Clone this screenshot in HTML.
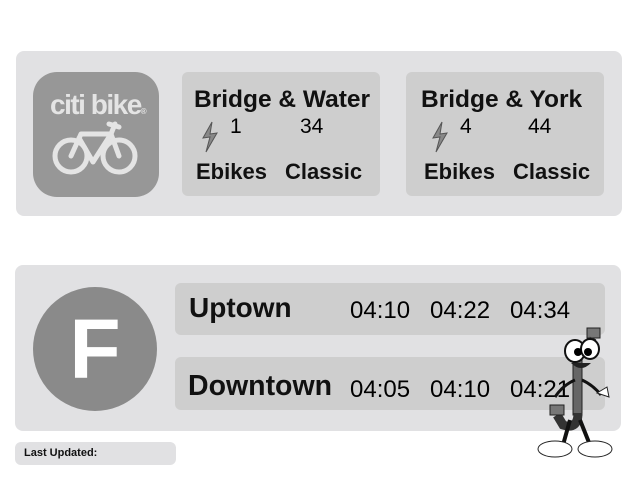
<!DOCTYPE html><html><head><style>
body{margin:0;width:640px;height:480px;background:#fff;font-family:"Liberation Sans",sans-serif;position:relative;overflow:hidden}
.a{position:absolute;white-space:nowrap}
.p{background:#e1e1e3;border-radius:8px}
.b{background:#cecece;border-radius:6px}
.t{font-weight:bold;color:#111}
</style></head><body>
<div class="a p" style="left:16px;top:51px;width:606px;height:165px"></div>
<div class="a" style="left:33px;top:72px;width:126px;height:125px;background:#979797;border-radius:24px"></div>
<div class="a" style="left:50px;top:89px;font-size:28px;font-weight:bold;color:#e4e4e4;letter-spacing:-1.5px">citi bike<span style="font-size:8px">®</span></div>
<svg class="a" style="left:33px;top:72px" width="126" height="125" fill="none" stroke="#e4e4e4" stroke-width="5" stroke-linecap="round" stroke-linejoin="round">
<circle cx="38" cy="84" r="16"/><circle cx="86" cy="84" r="16"/>
<path d="M38 84 L48 62 L78 62 M46 66 L60 90 L78 62 L86 84 M78 62 L82 52 M76 52 L86 55"/></svg>
<div class="a b" style="left:182px;top:72px;width:198px;height:124px"></div>
<div class="a t" style="left:194px;top:86px;font-size:24.5px">Bridge &amp; Water</div>
<div class="a" style="left:230px;top:115px;font-size:21px">1</div>
<div class="a" style="left:300px;top:115px;font-size:21px">34</div>
<div class="a t" style="left:196px;top:159px;font-size:22px">Ebikes</div>
<div class="a t" style="left:285px;top:159px;font-size:22px">Classic</div>
<div class="a b" style="left:406px;top:72px;width:198px;height:124px"></div>
<div class="a t" style="left:421px;top:86px;font-size:24.5px">Bridge &amp; York</div>
<div class="a" style="left:460px;top:115px;font-size:21px">4</div>
<div class="a" style="left:528px;top:115px;font-size:21px">44</div>
<div class="a t" style="left:424px;top:159px;font-size:22px">Ebikes</div>
<div class="a t" style="left:513px;top:159px;font-size:22px">Classic</div>
<svg class="a" style="left:200px;top:121px" width="20" height="32"><path d="M12 1 L3 17 L10 16 L6 31 L17 12 L10 13 Z" fill="#888" stroke="#555"/></svg>
<svg class="a" style="left:430px;top:121px" width="20" height="32"><path d="M12 1 L3 17 L10 16 L6 31 L17 12 L10 13 Z" fill="#888" stroke="#555"/></svg>
<div class="a p" style="left:15px;top:265px;width:606px;height:166px"></div>
<div class="a" style="left:33px;top:287px;width:124px;height:124px;border-radius:50%;background:#8a8a8a;color:#fff;font-weight:bold;font-size:84px;line-height:124px;text-align:center">F</div>
<div class="a b" style="left:175px;top:283px;width:430px;height:52px"></div>
<div class="a t" style="left:189px;top:292px;font-size:28px">Uptown</div>
<div class="a" style="left:350px;top:297px;font-size:24px">04:10</div>
<div class="a" style="left:430px;top:297px;font-size:24px">04:22</div>
<div class="a" style="left:510px;top:297px;font-size:24px">04:34</div>
<div class="a b" style="left:175px;top:357px;width:430px;height:53px"></div>
<div class="a t" style="left:188px;top:370px;font-size:28.5px">Downtown</div>
<div class="a" style="left:350px;top:376px;font-size:24px">04:05</div>
<div class="a" style="left:430px;top:376px;font-size:24px">04:10</div>
<div class="a" style="left:510px;top:376px;font-size:24px">04:21</div>
<div class="a" style="left:15px;top:442px;width:161px;height:23px;background:#e1e1e3;border-radius:6px"></div>
<div class="a t" style="left:24px;top:447px;font-size:11px">Last Updated:</div>
<svg class="a" style="left:535px;top:325px" width="80" height="135" viewBox="0 0 80 135">
<rect x="38" y="30" width="9" height="60" fill="#666" stroke="#222"/>
<rect x="52" y="3" width="13" height="10" fill="#777" stroke="#222"/>
<path d="M58 13 L50 32" stroke="#333" stroke-width="7"/>
<path d="M43 88 Q43 105 28 100 L22 90" fill="none" stroke="#333" stroke-width="9"/>
<rect x="15" y="80" width="14" height="10" fill="#777" stroke="#222"/>
<ellipse cx="40" cy="26" rx="10" ry="11" fill="#fff" stroke="#111" stroke-width="2"/>
<ellipse cx="55" cy="24" rx="9" ry="10" fill="#fff" stroke="#111" stroke-width="2"/>
<circle cx="43" cy="27" r="4"/><circle cx="53" cy="27" r="4"/>
<path d="M36 38 Q46 48 56 38" fill="#222"/>
<path d="M40 55 Q28 60 20 72 M47 55 Q58 60 66 70" stroke="#111" stroke-width="3" fill="none"/>
<path d="M35 95 L28 120 M45 95 L55 120" stroke="#111" stroke-width="4"/>
<ellipse cx="20" cy="124" rx="17" ry="8" fill="#fff" stroke="#222"/>
<ellipse cx="60" cy="124" rx="17" ry="8" fill="#fff" stroke="#222"/>
<path d="M62 68 L72 62 L74 72 Z" fill="#fff" stroke="#222"/>
</svg>
</body></html>
